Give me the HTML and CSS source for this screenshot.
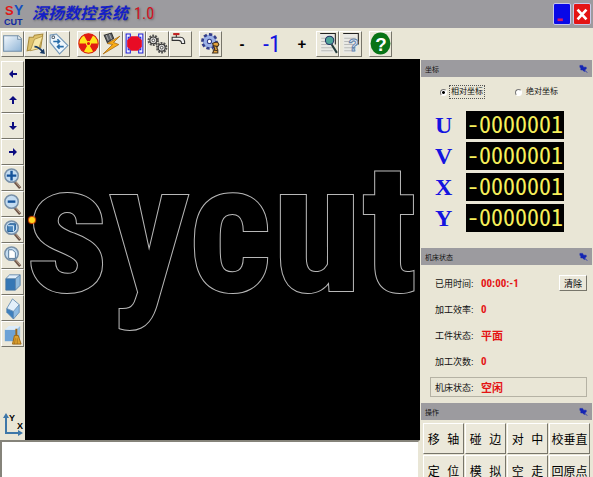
FILE: index.html
```html
<!doctype html>
<html lang="zh-CN">
<head>
	<meta charset="UTF-8">
	<title>深扬数控系统 1.0</title>
	<link rel="stylesheet" href="styles.css">
</head>
<body>
	<!-- 公用图标 -->
	<svg class="defs">
		<defs>
			<linearGradient id="blue" x1="0" y1="0" x2="1" y2="1"><stop offset="0" stop-color="#f4f9fd"/><stop offset="1" stop-color="#8db3d6"/></linearGradient>
			<symbol id="pin" viewBox="0 0 10 10"><path d="M1 1l3 0 1 2 3 0 0 2-2 1 0 2-2-2-2 0 0-2-1-1z" fill="#1425b4" stroke="#1425b4" stroke-width=".6"/><path d="M5 5l4 4" stroke="#1425b4"/></symbol>
			<symbol id="arrow" viewBox="0 0 10 10"><path d="M1 5l4-4v3h4v2H5v3z" fill="#0c0c80"/></symbol>
			<symbol id="lens" viewBox="0 0 20 24"><path d="M12 15l6 7" stroke="#6d5548" stroke-width="3"/><path d="M12 14l6 7" stroke="#c9b09c"/><circle cx="9" cy="9" r="7" fill="#c4dcf1" stroke="#7890a8" stroke-width="1.500"/></symbol>
			<symbol id="page" viewBox="0 0 20 22"><path d="M3 2h14v18H3z" fill="#e9e9e5"/><path d="M4 6h11M4 9h11M4 12h11M4 15h11M4 18h11" stroke="#b9bab8"/><path d="M3 1.500h14.500V12" fill="none" stroke="#222"/></symbol>
			<symbol id="gear" viewBox="0 0 12 12"><circle cx="6" cy="6" r="4.500" fill="none" stroke="#555" stroke-width="2" stroke-dasharray="1.800 1.000"/><circle cx="6" cy="6" r="3.300" fill="#ddd" stroke="#333"/><circle cx="6" cy="6" r="1.300" fill="#fff" stroke="#333" stroke-width=".8"/></symbol>
		</defs>
	</svg>
	<div class="app">
		<header class="title">
			<svg class="logo" width="20" height="24" viewBox="0 0 20 24">
				<text x="1" y="13" class="logo-s">S</text>
				<text x="10" y="13" class="logo-y">Y</text>
				<text x="0" y="23" class="logo-cut">CUT</text>
			</svg>
			<h1>深扬数控系统<span>1.0</span></h1>
			<button class="win min" aria-label="最小化"><svg viewBox="0 0 18 20"><path d="M4 15h6v3H4z" fill="#d5146a"/></svg></button>
			<button class="win close" aria-label="关闭"><svg viewBox="0 0 18 20"><path d="M4 5l10 11M14 5L4 16" stroke="#fff" stroke-width="3"/></svg></button>
		</header>

		<nav class="toolbar">
			<div class="group">
				<button class="tool" aria-label="新建"><svg viewBox="0 0 20 22"><path d="M1.500 3.500h14l3 3v12h-17z" fill="url(#blue)" stroke="#718da6"/><path d="M15 3.500v3.500h3.500" fill="#fff" stroke="#718da6"/></svg></button>
				<button class="tool" aria-label="打开"><svg viewBox="0 0 20 22"><path d="M2 18L4 5l4 0 1-2 8-1-2 13z" fill="#dfc26c" stroke="#a88a3c"/><path d="M5 18L9 7l8-3-4 12z" fill="#f7e6a5" stroke="#a88a3c" stroke-width=".7"/><path d="M9 14q4 0 8 5" fill="none" stroke="#173a66" stroke-width="1.500"/><path d="M19 21l-5-1 4-4z" fill="#173a66"/></svg></button>
				<button class="tool" aria-label="转换"><svg viewBox="0 0 20 22"><path d="M2 3l6-1 11 11-8 8L2 10z" fill="#eef6fc" stroke="#7397b8"/><circle cx="5" cy="5" r="1.300" fill="#fff" stroke="#567"/><path d="M15 14H9M11 12l-2 2 2 2M5 9h6M9 7l2 2-2 2" fill="none" stroke="#286ca8" stroke-width="1.500"/></svg></button>
			</div>
			<div class="group">
				<button class="tool" aria-label="高频"><svg viewBox="0 0 20 22"><circle cx="10" cy="11" r="9.300" fill="#ffe51c" stroke="#d71c10"/><path d="M10 11L5.500 3a9 9 0 0 1 9 0zM10 11h9a9 9 0 0 1-4.500 8zM10 11l-4.500 8A9 9 0 0 1 1 11z" fill="#e21b12"/><circle cx="10" cy="11" r="2" fill="#e21b12" stroke="#ffe51c"/></svg></button>
				<button class="tool" aria-label="电机"><svg viewBox="0 0 20 22"><path d="M18 4L6 11l5 1-9 9 15-9-5-2z" fill="#f8ac16" stroke="#a36108" stroke-width=".7"/><path d="M3 3l7-2 2 5-6 4z" fill="#5d6268" stroke="#333"/><path d="M5 3l2 5M8 2l2 5" stroke="#aaa"/></svg></button>
				<button class="tool" aria-label="丝筒"><svg viewBox="0 0 20 22"><path d="M6 2H2v18h4v-3H4V5h2zM14 2h4v18h-4v-3h2V5h-2z" fill="#eef" stroke="#2020d8"/><path d="M7 4h6l4 4v6l-4 4H7l-4-4V8z" fill="#e80c25"/></svg></button>
				<button class="tool" aria-label="参数"><svg viewBox="0 0 20 22"><use href="#gear" x="0" y="2" width="12" height="12"/><use href="#gear" x="8" y="9" width="12" height="12"/></svg></button>
				<button class="tool" aria-label="水泵"><svg viewBox="0 0 20 22"><path d="M2 5h8q4 0 4 6h-3q0-3-3-3H2z" fill="#f2f2f2" stroke="#333"/><path d="M6 5V2" stroke="#333"/><path d="M3 2h6" stroke="#c12020" stroke-width="2"/></svg></button>
			</div>
			<div class="group">
				<button class="tool" aria-label="加工设置"><svg viewBox="0 0 20 22"><circle cx="9" cy="9" r="6.500" fill="#8fa5df" stroke="#343e89" stroke-width="3" stroke-dasharray="3 2"/><circle cx="9" cy="9" r="5.500" fill="#9db2e6"/><circle cx="9" cy="9" r="2" fill="#fff" stroke="#343e89"/><path d="M12 11q5-3 6 1l-2 3 1 2v3h-5l2-4z" fill="#e7a43c" stroke="#41301e"/><path d="M12 13l5 1M12 17l5 1" stroke="#41301e"/></svg></button>
			</div>
			<div class="speed">
				<button class="step" aria-label="减">-</button>
				<output>-1</output>
				<button class="step" aria-label="加">+</button>
			</div>
			<div class="group">
				<button class="tool" aria-label="查看"><svg viewBox="0 0 20 22"><use href="#page" width="20" height="22"/><circle cx="12" cy="8" r="4" fill="#4fa59a" stroke="#236"/><path d="M14 12l5 8" stroke="#243b3b" stroke-width="2"/></svg></button>
				<button class="tool" aria-label="说明"><svg viewBox="0 0 20 22"><use href="#page" width="20" height="22"/><text x="8" y="18" class="ask">?</text></svg></button>
			</div>
			<button class="tool" aria-label="帮助"><svg viewBox="0 0 20 22"><ellipse cx="10" cy="11" rx="9.500" ry="10.500" fill="#087416"/><text x="5" y="18" class="help">?</text></svg></button>
		</nav>

		<aside class="side">
			<button class="tool" aria-label="左移"><svg class="dir" viewBox="0 0 10 10"><use href="#arrow"/></svg></button>
			<button class="tool" aria-label="上移"><svg class="dir up" viewBox="0 0 10 10"><use href="#arrow"/></svg></button>
			<button class="tool" aria-label="下移"><svg class="dir down" viewBox="0 0 10 10"><use href="#arrow"/></svg></button>
			<button class="tool" aria-label="右移"><svg class="dir right" viewBox="0 0 10 10"><use href="#arrow"/></svg></button>
			<button class="tool" aria-label="放大"><svg viewBox="0 0 20 24"><use href="#lens" width="20" height="24"/><path d="M4 9h10M9 4v10" stroke="#15539a" stroke-width="2.500"/></svg></button>
			<button class="tool" aria-label="缩小"><svg viewBox="0 0 20 24"><use href="#lens" width="20" height="24"/><path d="M5 9h8" stroke="#15539a" stroke-width="2.500"/></svg></button>
			<button class="tool" aria-label="窗口缩放"><svg viewBox="0 0 20 24"><use href="#lens" width="20" height="24"/><path d="M5 7l2-2h6v6l-2 2H5z" fill="#4c87be" stroke="#235b91"/><path d="M5 7h6v6" fill="none" stroke="#dcecf8"/></svg></button>
			<button class="tool" aria-label="全部显示"><svg viewBox="0 0 20 24"><use href="#lens" width="20" height="24"/><path d="M6 5h4l3 3v6H6z" fill="#fff" stroke="#55789a"/></svg></button>
			<button class="tool" aria-label="立方体"><svg viewBox="0 0 20 24"><path d="M3 8h10v12H3z" fill="#3577b5"/><path d="M3 8l4-4h11l-5 4z" fill="#e0eefa"/><path d="M13 8l5-4v11l-5 5z" fill="#8eb9dc"/><path d="M3 8h10v12H3zM3 8l4-4h11l-5 4M18 4v11l-5 5" fill="none" stroke="#49759e" stroke-width=".8"/></svg></button>
			<button class="tool" aria-label="锥度"><svg viewBox="0 0 20 24"><path d="M4 12l7 3v8l-7-7z" fill="#3f80bd"/><path d="M11 15l6-7v8l-6 7z" fill="#8fbbe2"/><path d="M4 12l6-10 7 6-6 7z" fill="#e4f0fa"/><path d="M4 12l6-10 7 6v8l-6 7-7-7zM4 12l7 3 6-7M11 15v8" fill="none" stroke="#5482ac" stroke-width=".8"/></svg></button>
			<button class="tool" aria-label="清屏"><svg viewBox="0 0 20 24"><path d="M2 7h12v12H2z" fill="#6ca2d6"/><path d="M2 7l4-4h12l-4 4z" fill="#dcecfa"/><path d="M14 7l4-4v12l-4 4z" fill="#98c0e2"/><path d="M14 6v8" stroke="#9c6718" stroke-width="2"/><path d="M12 13h4l3 9h-9z" fill="#dda12e" stroke="#9c6718"/><path d="M13 16l-1 6M15 16v6" stroke="#9c6718" stroke-width=".7"/></svg></button>
			<svg class="axis" width="23" height="26" viewBox="0 0 23 26">
				<path d="M5 4v17h13" fill="none" stroke="#3e77a8" stroke-width="2"/>
				<path d="M2 6l3-5 3 5zM17 18l5 3-5 3z" fill="#3e77a8"/>
				<text x="8" y="9">Y</text><text x="16" y="17">X</text>
			</svg>
		</aside>

		<main class="view">
			<div class="shape">sycut</div>
			<i class="point"></i>
		</main>

		<section class="panel">
			<h2>坐标<svg><use href="#pin"/></svg></h2>
			<div class="modes">
				<label class="on"><input type="radio" name="mode" checked><span>相对坐标</span></label>
				<label><input type="radio" name="mode"><span>绝对坐标</span></label>
			</div>
			<dl class="coords">
				<dt>U</dt><dd>-0000001</dd>
				<dt>V</dt><dd>-0000001</dd>
				<dt>X</dt><dd>-0000001</dd>
				<dt>Y</dt><dd>-0000001</dd>
			</dl>
			<h2>机床状态<svg><use href="#pin"/></svg></h2>
			<div class="status">
				<div class="row"><span>已用时间:</span><b>00:00:-1</b><button class="clear">清除</button></div>
				<div class="row"><span>加工效率:</span><b>0</b></div>
				<div class="row"><span>工件状态:</span><b>平面</b></div>
				<div class="row"><span>加工次数:</span><b>0</b></div>
				<div class="row boxed"><span>机床状态:</span><b>空闲</b></div>
			</div>
			<h2>操作<svg><use href="#pin"/></svg></h2>
			<div class="ops">
				<button class="wide">移 轴</button>
				<button class="wide">碰 边</button>
				<button class="wide">对 中</button>
				<button>校垂直</button>
				<button class="wide">定 位</button>
				<button class="wide">模 拟</button>
				<button class="wide">空 走</button>
				<button>回原点</button>
			</div>
		</section>

		<textarea class="log" aria-label="信息" readonly></textarea>
	</div>
</body>
</html>
```

FILE: styles.css
```css
*{
	box-sizing: border-box;
}
body{
	margin: 0;
	overflow: hidden;
	background: #e9e6d6;
	font-family: "Liberation Sans", "Noto Sans CJK SC", sans-serif;
	color: #111;
}
button{
	font-family: inherit;
	padding: 0;
}
svg{
	display: block;
}
.defs{
	position: absolute;
	width: 0;
	height: 0;
}
.app{
	display: grid;
	grid-template-columns: 25px 1fr 173px;
	grid-template-rows: 28px 31px 1fr 37px;
	grid-template-areas:
		"title title title"
		"tools tools tools"
		"side view panel"
		"log log panel";
	height: 100vh;
}
/* 标题栏 */
.title{
	grid-area: title;
	display: flex;
	align-items: center;
	padding: 0 2px 0 4px;
	background: #9c9b9f;
}
.title h1{
	flex: 1;
	display: flex;
	align-items: center;
	gap: 6px;
	margin: 0 0 0 8px;
	font-size: 16px;
	font-style: italic;
	font-weight: bold;
	line-height: 28px;
	color: #1420c8;
	text-shadow: 1px 1px 2px #666;
}
.title h1 span{
	font-family: "Roboto Condensed", Roboto, sans-serif;
	font-style: normal;
	font-weight: normal;
	color: #d0101c;
}
.logo{
	font-weight: bold;
}
.logo-s{
	font-size: 13px;
	fill: #e01818;
}
.logo-y{
	font-size: 14px;
	fill: #1450c0;
}
.logo-cut{
	font-size: 9px;
	fill: #1028a0;
}
.win{
	width: 18px;
	height: 22px;
	margin-left: 2px;
	border: 1px solid #c8c8e8;
	border-radius: 2px;
}
.min{
	background: #0808e8;
}
.close{
	background: #e41414;
}
.win svg{
	width: 100%;
	height: 100%;
}
/* 工具栏 */
.toolbar{
	grid-area: tools;
	display: flex;
	align-items: center;
	padding-left: 1px;
}
.group{
	display: flex;
	margin-right: 7px;
}
.tool{
	width: 23px;
	height: 26px;
	border: 1px solid;
	border-color: #fff #77756a #77756a #fff;
	background: #ebe8da;
}
.tool svg{
	width: 21px;
	height: 23px;
}
.speed{
	display: flex;
	align-items: center;
	justify-content: space-between;
	width: 72px;
	margin: 0 8px 0 7px;
}
.speed output{
	font: 24px "Roboto Condensed", Roboto, sans-serif;
	line-height: 28px;
	color: #1414e0;
}
.step{
	width: 12px;
	border: 0;
	background: none;
	font-size: 15px;
	font-weight: bold;
}
.ask{
	font-size: 16px;
	font-weight: bold;
	fill: #e4edf8;
	stroke: #6685ad;
}
.help{
	font-size: 18px;
	font-weight: bold;
	fill: #fff;
}
/* 左侧工具 */
.side{
	grid-area: side;
	display: flex;
	flex-direction: column;
	padding: 2px 0 0 1px;
}
.tool .dir{
	width: 10px;
	height: 10px;
	margin: 0 auto;
}
.up{
	transform: rotate(90deg);
}
.down{
	transform: rotate(-90deg);
}
.right{
	transform: rotate(180deg);
}
.axis{
	margin-top: auto;
	margin-bottom: 2px;
	font-size: 9px;
	font-weight: bold;
}
/* 图形区 */
.view{
	grid-area: view;
	position: relative;
	overflow: hidden;
	background: #000;
}
/* 先描边再填充, 只留外轮廓 */
.shape{
	padding: 70px 0 0 1px;
	font: bold 182px/200px "Roboto Condensed", Roboto, sans-serif;
	color: #000;
	-webkit-text-stroke: 2px #b8b8b8;
	paint-order: stroke fill;
	white-space: nowrap;
}
.point{
	position: absolute;
	left: 4px;
	top: 158px;
	width: 6px;
	height: 6px;
	border-radius: 50%;
	background: #ffd820;
	box-shadow: 0 0 1px 1px #e85000;
}
/* 右侧面板 */
.panel{
	grid-area: panel;
	min-height: 0;
	overflow: hidden;
	padding: 1px 1px 0;
}
.panel h2{
	display: flex;
	align-items: center;
	justify-content: space-between;
	height: 17px;
	margin: 0;
	padding: 0 4px;
	background: #9c9b9f;
	font-size: 7px;
	font-weight: normal;
}
.panel h2 svg{
	width: 9px;
	height: 10px;
}
.modes{
	display: flex;
	gap: 30px;
	padding: 8px 0 0 19px;
	font-size: 8px;
	line-height: 14px;
}
.modes label{
	display: flex;
	align-items: center;
	gap: 2px;
}
.modes input{
	appearance: none;
	width: 7px;
	height: 7px;
	margin: 0;
	border: 1px solid;
	border-color: #777 #fff #fff #777;
	border-radius: 50%;
	background: #fff;
}
.modes input:checked{
	background: radial-gradient(#000 35%, #fff 45%);
}
.modes span{
	padding: 0 1px;
	line-height: 12px;
	border: 1px solid transparent;
}
.modes .on span{
	border: 1px dotted #555;
}
.coords{
	display: grid;
	grid-template-columns: 31px 98px;
	row-gap: 3px;
	margin: 12px 0 16px 14px;
	line-height: 28px;
}
.coords dt{
	font-family: "Liberation Serif", serif;
	font-size: 24px;
	font-weight: bold;
	color: #1414e0;
}
/* 半宽数字 */
.coords dd{
	margin: 0;
	padding: 0 1px 4px 0;
	background: #000;
	font-family: "Noto Sans CJK SC", sans-serif;
	font-size: 24px;
	line-height: 24px;
	font-feature-settings: "hwid";
	color: #f6f05a;
	text-align: right;
}
.status{
	padding: 5px 5px 3px 9px;
	font-size: 9px;
}
.row{
	display: flex;
	align-items: center;
	height: 26px;
	padding-left: 5px;
}
.row span{
	width: 46px;
}
.row b{
	font-family: "Roboto Condensed", "Noto Sans CJK SC", sans-serif;
	font-size: 11px;
	color: #e41414;
}
.boxed{
	height: 20px;
	margin-top: 3px;
	margin-bottom: 3px;
	padding-left: 4px;
	border: 1px solid #b5b2a4;
}
.clear{
	width: 28px;
	height: 16px;
	margin-left: auto;
	border: 1px solid;
	border-color: #fff #77756a #77756a #fff;
	background: #ebe8da;
	font-size: 9px;
}
.ops{
	display: grid;
	grid-template-columns: repeat(4, 1fr);
	grid-auto-rows: 31px;
	gap: 1px;
	padding: 3px 2px 0;
}
.ops button{
	border: 1px solid;
	border-color: #fff #77756a #77756a #fff;
	background: #ebe8da;
	font-size: 12px;
	white-space: nowrap;
}
.ops .wide{
	word-spacing: 4px;
}
/* 信息输出 */
.log{
	grid-area: log;
	width: 100%;
	height: 100%;
	margin: 0;
	padding: 2px;
	border: 2px solid;
	border-color: #85837a #e9e6d6 #fff #85837a;
	border-bottom: 0;
	background: #fff;
	resize: none;
}
```
